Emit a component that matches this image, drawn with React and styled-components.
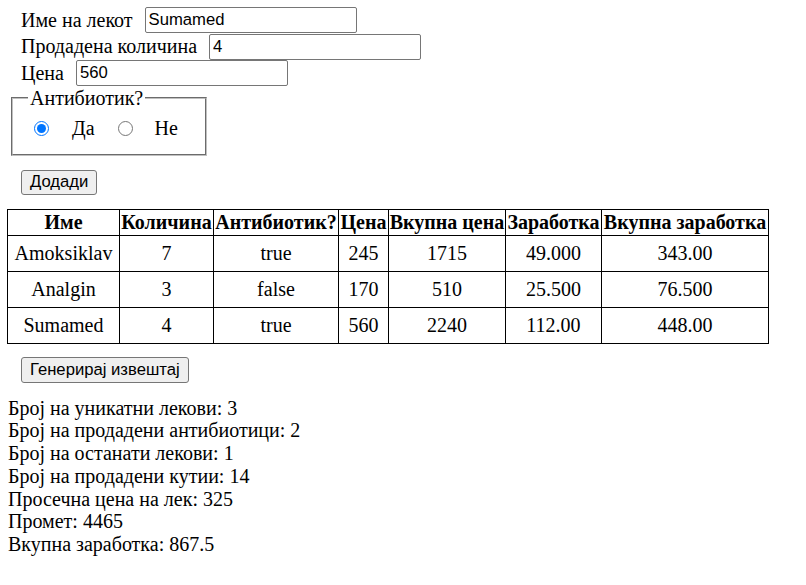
import React, { useState } from "react";
import styled, { createGlobalStyle } from "styled-components";

const GlobalStyle = createGlobalStyle`
  body {
    margin: 0;
    background: #fff;
    color: #000;
    font-family: "Liberation Serif", "Times New Roman", serif;
    font-size: 20px;
  }
`;

const Page = styled.div`
  padding-top: 7px;
`;

const FormRows = styled.div`
  display: flex;
  flex-direction: column;
  margin-left: 21px;
`;

const FormRow = styled.div`
  display: flex;
  align-items: center;
  height: 26.5px;
`;

const Label = styled.label`
  margin-right: 12px;
  line-height: 23px;
`;

const TextInput = styled.input`
  box-sizing: border-box;
  width: 212px;
  height: 26px;
  padding: 0 3px;
  margin: 0;
  border: 1px solid #767676;
  border-radius: 2px;
  font-family: "Liberation Sans", Arial, sans-serif;
  font-size: 16.67px;
  color: #000;
`;

const Fieldset = styled.fieldset`
  box-sizing: border-box;
  width: 196px;
  margin: 0 0 0 11px;
  padding: 7px 0 14px 15px;
  border: 2px groove #c0c0c0;
`;

const Legend = styled.legend`
  padding: 0 2px;
  line-height: 23px;
`;

const RadioGroup = styled.div`
  display: flex;
  align-items: center;
  height: 23px;
  padding-left: 6px;
`;

const Radio = styled.input`
  width: 15px;
  height: 15px;
  margin: 0 0 0 ${(p) => p.$offset}px;
  accent-color: #0075ff;
`;

const RadioText = styled.span`
  margin-left: ${(p) => p.$offset}px;
`;

const Button = styled.button`
  display: block;
  box-sizing: border-box;
  height: ${(p) => p.$h}px;
  margin: ${(p) => p.$top}px 0 0 21px;
  padding: 0 8px;
  background: #efefef;
  border: 1px solid #767676;
  border-radius: 3px;
  font-family: "Liberation Sans", Arial, sans-serif;
  font-size: 16.67px;
  color: #000;
`;

const Table = styled.table`
  margin: 14px 0 0 7px;
  border-collapse: collapse;
  table-layout: fixed;
  width: 761px;
`;

const Th = styled.th`
  border: 1px solid #000;
  padding: 1px 0;
  height: 23px;
  font-weight: bold;
  white-space: nowrap;
  text-align: center;
`;

const Td = styled.td`
  border: 1px solid #000;
  padding: 0;
  height: 35px;
  text-align: center;
`;

const Report = styled.div`
  margin: 14px 0 0 8px;
`;

const ReportLine = styled.div`
  line-height: 22.8px;
`;

const columns = [
  { title: "Име", width: 112 },
  { title: "Количина", width: 94 },
  { title: "Антибиотик?", width: 125 },
  { title: "Цена", width: 50 },
  { title: "Вкупна цена", width: 117 },
  { title: "Заработка", width: 96 },
  { title: "Вкупна заработка", width: 167 },
];

const rows = [
  ["Amoksiklav", "7", "true", "245", "1715", "49.000", "343.00"],
  ["Analgin", "3", "false", "170", "510", "25.500", "76.500"],
  ["Sumamed", "4", "true", "560", "2240", "112.00", "448.00"],
];

const report = [
  "Број на уникатни лекови: 3",
  "Број на продадени антибиотици: 2",
  "Број на останати лекови: 1",
  "Број на продадени кутии: 14",
  "Просечна цена на лек: 325",
  "Промет: 4465",
  "Вкупна заработка: 867.5",
];

export default function App() {
  const [name, setName] = useState("Sumamed");
  const [qty, setQty] = useState("4");
  const [price, setPrice] = useState("560");
  const [antibiotic, setAntibiotic] = useState(true);

  return (
    <Page>
      <GlobalStyle />
      <FormRows>
        <FormRow>
          <Label>Име на лекот</Label>
          <TextInput value={name} onChange={(e) => setName(e.target.value)} />
        </FormRow>
        <FormRow>
          <Label>Продадена количина</Label>
          <TextInput value={qty} onChange={(e) => setQty(e.target.value)} />
        </FormRow>
        <FormRow>
          <Label>Цена</Label>
          <TextInput value={price} onChange={(e) => setPrice(e.target.value)} />
        </FormRow>
      </FormRows>
      <Fieldset>
        <Legend>Антибиотик?</Legend>
        <RadioGroup>
          <Radio
            type="radio"
            name="ab"
            $offset={0}
            checked={antibiotic}
            onChange={() => setAntibiotic(true)}
          />
          <RadioText $offset={23}>Да</RadioText>
          <Radio
            type="radio"
            name="ab"
            $offset={23}
            checked={!antibiotic}
            onChange={() => setAntibiotic(false)}
          />
          <RadioText $offset={22}>Не</RadioText>
        </RadioGroup>
      </Fieldset>
      <Button $top={14} $h={25}>Додади</Button>
      <Table>
        <colgroup>
          {columns.map((c) => (
            <col key={c.title} style={{ width: c.width }} />
          ))}
        </colgroup>
        <thead>
          <tr>
            {columns.map((c) => (
              <Th key={c.title}>{c.title}</Th>
            ))}
          </tr>
        </thead>
        <tbody>
          {rows.map((r) => (
            <tr key={r[0]}>
              {r.map((cell, i) => (
                <Td key={i}>{cell}</Td>
              ))}
            </tr>
          ))}
        </tbody>
      </Table>
      <Button $top={13} $h={26}>Генерирај извештај</Button>
      <Report>
        {report.map((line) => (
          <ReportLine key={line}>{line}</ReportLine>
        ))}
      </Report>
    </Page>
  );
}
